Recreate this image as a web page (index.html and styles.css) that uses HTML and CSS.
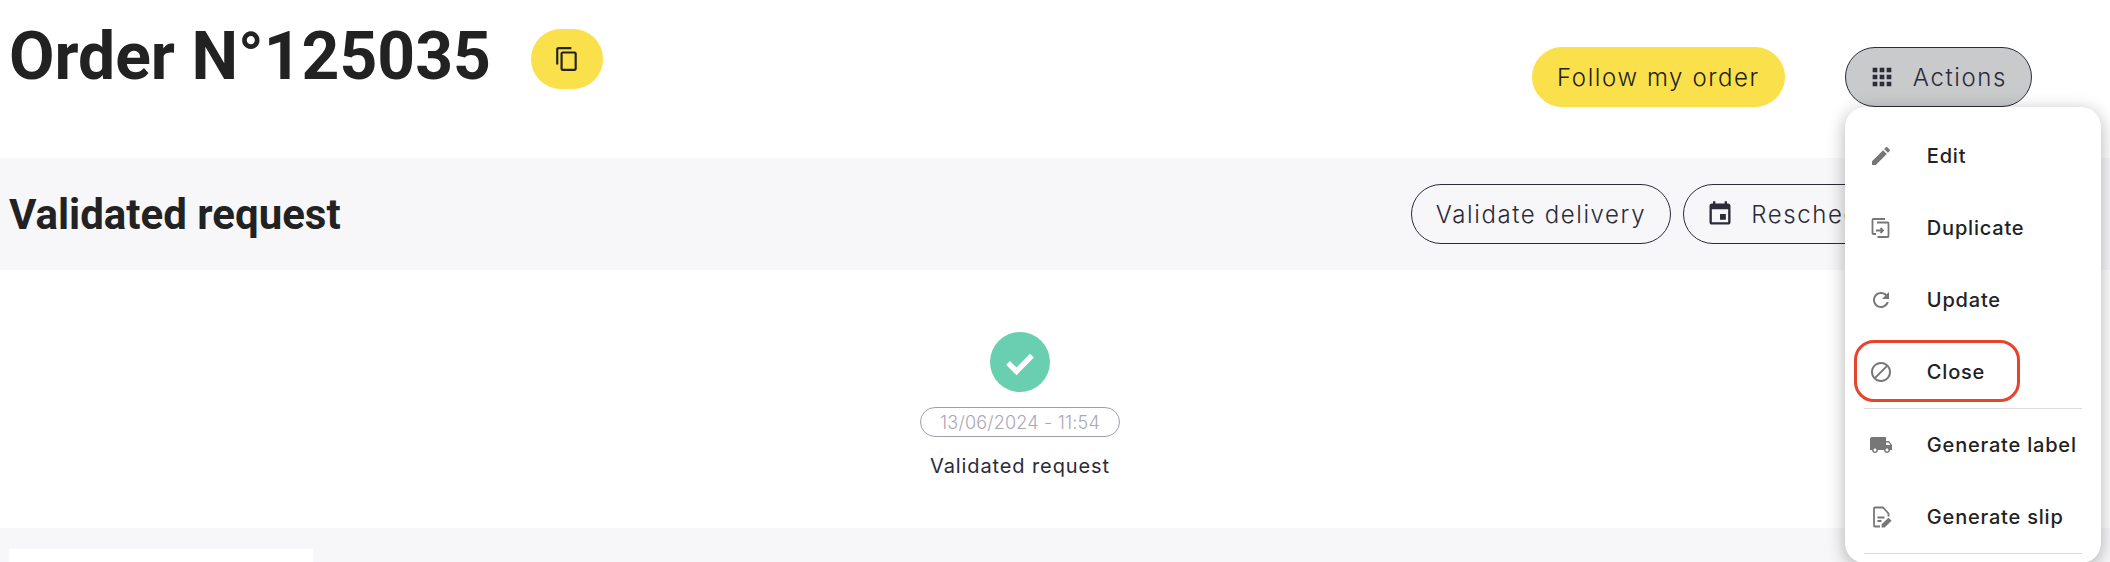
FILE: index.html
```html
<!DOCTYPE html>
<html lang="en">
  <head>
    <meta charset="UTF-8" />
    <meta name="viewport" content="width=device-width, initial-scale=1.0" />
    <title>Order N°125035</title>
    <link rel="stylesheet" href="styles.css">
  </head>
  <body>
    <header class="page-header">
      <h1 class="order-title">Order N°125035</h1>
      <button class="copy-button" aria-label="Copy">
        <svg class="icon" viewBox="0 0 24 24"><path d="M16 1H4c-1.1 0-2 .9-2 2v14h2V3h12V1zm3 4H8c-1.1 0-2 .9-2 2v14c0 1.1.9 2 2 2h11c1.1 0 2-.9 2-2V7c0-1.1-.9-2-2-2zm0 16H8V7h11v14z"/></svg>
      </button>
      <div class="header-actions">
        <button class="pill pill-yellow">Follow my order</button>
        <div class="actions-wrap">
          <button class="pill pill-active pill-icon">
            <svg class="icon" viewBox="0 0 24 24"><path d="M4 8h4V4H4v4zm6 12h4v-4h-4v4zm-6 0h4v-4H4v4zm0-6h4v-4H4v4zm6 0h4v-4h-4v4zm6-10v4h4V4h-4zm-6 4h4V4h-4v4zm6 6h4v-4h-4v4zm0 6h4v-4h-4v4z"/></svg>
            Actions
          </button>
          <div class="menu">
            <div class="menu-item">
              <svg class="icon" viewBox="0 0 24 24"><path d="M3 17.25V21h3.75L17.81 9.94l-3.75-3.75L3 17.25zM20.71 7.04c.39-.39.39-1.02 0-1.41l-2.34-2.34c-.39-.39-1.02-.39-1.41 0l-1.83 1.83 3.75 3.75 1.83-1.83z"/></svg>
              Edit
            </div>
            <div class="menu-item">
              <svg class="icon icon-line" viewBox="0 0 24 24"><path d="M7 18H4.5a1 1 0 0 1-1-1V4a1 1 0 0 1 1-1H16"/><path d="M8 6.5h10.5a1 1 0 0 1 1 1V20a1 1 0 0 1-1 1H8.5"/><path d="M7 14.5h7M11.5 12l2.5 2.5-2.5 2.5"/></svg>
              Duplicate
            </div>
            <div class="menu-item">
              <svg class="icon" viewBox="0 0 24 24"><path d="M17.65 6.35C16.2 4.9 14.21 4 12 4c-4.42 0-7.99 3.58-7.99 8s3.57 8 7.99 8c3.73 0 6.84-2.55 7.73-6h-2.08c-.82 2.33-3.04 4-5.65 4-3.31 0-6-2.69-6-6s2.69-6 6-6c1.66 0 3.14.69 4.22 1.78L13 11h7V4l-2.35 2.35z"/></svg>
              Update
            </div>
            <div class="menu-item menu-item-marked">
              <svg class="icon" viewBox="0 0 24 24"><path d="M12 2C6.48 2 2 6.48 2 12s4.48 10 10 10 10-4.48 10-10S17.52 2 12 2zM4 12c0-4.42 3.58-8 8-8 1.85 0 3.55.63 4.9 1.69L5.69 16.9C4.63 15.55 4 13.85 4 12zm8 8c-1.85 0-3.55-.63-4.9-1.69L18.31 7.1C19.37 8.45 20 10.15 20 12c0 4.42-3.58 8-8 8z"/></svg>
              Close
            </div>
            <hr class="menu-divider" />
            <div class="menu-item">
              <svg class="icon" viewBox="0 0 24 24"><path d="M20 8h-3V4H3c-1.1 0-2 .9-2 2v11h2c0 1.66 1.34 3 3 3s3-1.34 3-3h6c0 1.66 1.34 3 3 3s3-1.34 3-3h2v-5l-3-4zM6 18.5c-.83 0-1.5-.67-1.5-1.5s.67-1.5 1.5-1.5 1.5.67 1.5 1.5-.67 1.5-1.5 1.5zm13.5-9l1.96 2.5H17V9.5h2.5zm-1.5 9c-.83 0-1.5-.67-1.5-1.5s.67-1.5 1.5-1.5 1.5.67 1.5 1.5-.67 1.5-1.5 1.5z"/></svg>
              Generate label
            </div>
            <div class="menu-item">
              <svg class="icon icon-line" viewBox="0 0 24 24"><path d="M11 21.5H6a1 1 0 0 1-1-1v-17a1 1 0 0 1 1-1h8l5.5 6v3"/><path d="M8.5 12.5h7M8.5 16h4"/><path d="M13.5 21.5v-1.8l6-5.7 1.8 1.8-6 5.7z" fill="#777"/></svg>
              Generate slip
            </div>
            <hr class="menu-divider" />
          </div>
        </div>
      </div>
    </header>

    <section class="status-bar">
      <h2 class="status-title">Validated request</h2>
      <div class="status-actions">
        <button class="pill pill-outline">Validate delivery</button>
        <button class="pill pill-outline pill-icon">
          <svg class="icon" viewBox="0 0 24 24"><path d="M17 12h-5v5h5v-5zM16 1v2H8V1H6v2H5c-1.11 0-1.99.9-1.99 2L3 19c0 1.1.89 2 2 2h14c1.1 0 2-.9 2-2V5c0-1.1-.9-2-2-2h-1V1h-2zm3 18H5V8h14v11z"/></svg>
          Reschedule
        </button>
      </div>
    </section>

    <section class="timeline">
      <div class="timeline-check">
        <svg viewBox="0 0 24 24"><path d="M5.5 12.5l4.6 4.6 8.4-8.6"/></svg>
      </div>
      <div class="timeline-date">13/06/2024 - 11:54</div>
      <div class="timeline-label">Validated request</div>
    </section>

    <section class="details">
      <div class="details-card"></div>
    </section>
  </body>
</html>
```

FILE: styles.css
```css
* {
  box-sizing: border-box;
}

html,
body {
  height: 562px;
  margin: 0;
  overflow: hidden;
}

body {
  background-color: #fff;
  color: #222;
  font-family: Inter, "Open Sans", sans-serif;
}

.icon {
  width: 24px;
  height: 24px;
  flex: none;
  fill: currentColor;
}

.icon-line {
  fill: none;
  stroke: currentColor;
  stroke-width: 1.8;
}

.page-header {
  display: flex;
  align-items: flex-start;
  height: 158px;
  padding: 0 78px 0 9px;
}

.order-title {
  margin: 18px 0 0;
  font-family: Roboto, sans-serif;
  font-size: 66px;
  font-weight: 700;
  line-height: 77px;
}

.copy-button {
  display: flex;
  align-items: center;
  justify-content: center;
  width: 72px;
  height: 60px;
  margin: 29px 0 0 40px;
  border: none;
  border-radius: 30px;
  background-color: #fae04a;
  color: #222;
}

.copy-button .icon {
  width: 26px;
  height: 26px;
}

.header-actions {
  display: flex;
  gap: 60px;
  margin: 47px 0 0 auto;
}

.actions-wrap {
  position: relative;
}

.pill {
  display: flex;
  align-items: center;
  gap: 17px;
  height: 60px;
  padding: 0 24px;
  border: 1px solid transparent;
  border-radius: 30px;
  color: #2b2b3a;
  font-family: Inter, "Open Sans", sans-serif;
  font-size: 24px;
  font-weight: 300;
  letter-spacing: 1.6px;
  white-space: nowrap;
}

.pill .icon {
  width: 28px;
  height: 28px;
}

.pill-icon {
  padding-left: 22px;
}

.pill-yellow {
  background-color: #fae04a;
  border-color: #fae04a;
  color: #222;
}

.pill-active {
  background-color: #c9cacc;
  border-color: #2b2b3a;
}

.pill-outline {
  background-color: transparent;
  border-color: #2b2b3a;
}

.menu {
  position: absolute;
  top: 60px;
  left: 0;
  z-index: 10;
  width: 256px;
  height: 456px;
  padding: 13px 0 0;
  border-radius: 20px;
  background-color: #fff;
  box-shadow: 0 4px 18px rgba(0, 0, 0, 0.3);
}

.menu-item {
  position: relative;
  display: flex;
  align-items: center;
  gap: 34px;
  height: 72px;
  padding-left: 24px;
  color: #222;
  font-size: 20px;
  font-weight: 500;
  letter-spacing: 0.8px;
  white-space: nowrap;
}

.menu-item .icon {
  color: #777;
}

.menu-item-marked::after {
  content: "";
  position: absolute;
  top: 4px;
  left: 9px;
  width: 160px;
  height: 56px;
  border: 3px solid #e8432b;
  border-radius: 20px;
}

.menu-divider {
  height: 1px;
  margin: 0 19px;
  border: none;
  background-color: #dcdcdf;
}

.status-bar {
  display: flex;
  align-items: center;
  height: 112px;
  padding: 0 9px;
  background-color: #f7f7f9;
}

.status-title {
  margin: 0;
  font-family: Roboto, sans-serif;
  font-size: 42px;
  font-weight: 700;
}

.status-actions {
  display: flex;
  gap: 12px;
  margin-left: 1070px;
}

.timeline {
  display: flex;
  flex-direction: column;
  align-items: center;
  height: 258px;
  padding-top: 62px;
  padding-right: 70px;
}

.timeline-check {
  display: flex;
  align-items: center;
  justify-content: center;
  width: 60px;
  height: 60px;
  border-radius: 50%;
  background-color: #69cfb0;
}

.timeline-check svg {
  width: 44px;
  height: 44px;
  fill: none;
  stroke: #fff;
  stroke-width: 3;
}

.timeline-date {
  display: flex;
  align-items: center;
  justify-content: center;
  width: 200px;
  height: 30px;
  margin-top: 15px;
  border: 1px solid #a09db5;
  border-radius: 15px;
  color: #a9a7b8;
  font-size: 18px;
  font-weight: 300;
  letter-spacing: 0.2px;
}

.timeline-label {
  margin-top: 17px;
  color: #2b2b3a;
  font-size: 20px;
  font-weight: 400;
  letter-spacing: 0.9px;
  line-height: 24px;
}

.details {
  height: 34px;
  padding: 21px 0 0 9px;
  background-color: #f7f7f9;
}

.details-card {
  width: 304px;
  height: 13px;
  background-color: #fff;
}
```
